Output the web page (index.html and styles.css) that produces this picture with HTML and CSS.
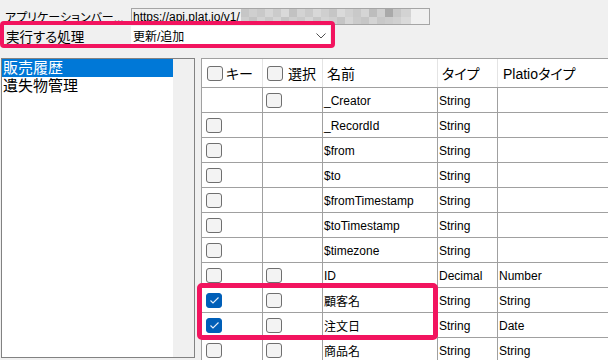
FILE: index.html
```html
<!DOCTYPE html>
<html lang="ja">
<head>
<meta charset="utf-8">
<title>設定</title>
<link rel="stylesheet" href="styles.css">
</head>
<body>
<div class="form">
  <div class="form-row row-url">
    <span class="label label-url">アプリケーションバー...</span>
    <div class="textbox"><span class="url">https://api.plat.io/v1/</span><span class="mosaic"></span></div>
  </div>
  <div class="form-row row-op">
    <span class="label label-op">実行する処理</span>
    <div class="select"><span class="select-text">更新/追加</span>
      <svg class="chev" width="10" height="6" viewBox="0 0 10 6"><polyline points="0.5,0.5 5,5 9.5,0.5" fill="none" stroke="#505050" stroke-width="1"/></svg>
    </div>
  </div>
  <div class="mark mark-op"></div>
</div>
<div class="main">
  <div class="side">
    <ul class="list">
      <li class="sel">販売履歴</li>
      <li>遺失物管理</li>
    </ul>
    <div class="side-rest"></div>
  </div>
  <div class="grid">
    <div class="row head">
      <div class="cell c1"><span class="cb"></span><span class="htext">キー</span></div>
      <div class="cell c2"><span class="cb"></span><span class="htext htext2">選択</span></div>
      <div class="cell c3">名前</div>
      <div class="cell c4">タイプ</div>
      <div class="cell c5">Platioタイプ</div>
    </div>
    <div class="row">
      <div class="cell c1"></div>
      <div class="cell c2"><span class="cb"></span></div>
      <div class="cell c3">_Creator</div>
      <div class="cell c4">String</div>
      <div class="cell c5"></div>
    </div>
    <div class="row">
      <div class="cell c1"><span class="cb"></span></div>
      <div class="cell c2"></div>
      <div class="cell c3">_RecordId</div>
      <div class="cell c4">String</div>
      <div class="cell c5"></div>
    </div>
    <div class="row">
      <div class="cell c1"><span class="cb"></span></div>
      <div class="cell c2"></div>
      <div class="cell c3">$from</div>
      <div class="cell c4">String</div>
      <div class="cell c5"></div>
    </div>
    <div class="row">
      <div class="cell c1"><span class="cb"></span></div>
      <div class="cell c2"></div>
      <div class="cell c3">$to</div>
      <div class="cell c4">String</div>
      <div class="cell c5"></div>
    </div>
    <div class="row">
      <div class="cell c1"><span class="cb"></span></div>
      <div class="cell c2"></div>
      <div class="cell c3">$fromTimestamp</div>
      <div class="cell c4">String</div>
      <div class="cell c5"></div>
    </div>
    <div class="row">
      <div class="cell c1"><span class="cb"></span></div>
      <div class="cell c2"></div>
      <div class="cell c3">$toTimestamp</div>
      <div class="cell c4">String</div>
      <div class="cell c5"></div>
    </div>
    <div class="row">
      <div class="cell c1"><span class="cb"></span></div>
      <div class="cell c2"></div>
      <div class="cell c3">$timezone</div>
      <div class="cell c4">String</div>
      <div class="cell c5"></div>
    </div>
    <div class="row">
      <div class="cell c1"><span class="cb"></span></div>
      <div class="cell c2"><span class="cb"></span></div>
      <div class="cell c3">ID</div>
      <div class="cell c4">Decimal</div>
      <div class="cell c5">Number</div>
    </div>
    <div class="row">
      <div class="cell c1"><span class="cb on"><svg width="11" height="9" viewBox="0 0 11 9"><polyline points="1.5,4.5 4,7 9.5,1.5" fill="none" stroke="#e8f0fa" stroke-width="1.1"/></svg></span></div>
      <div class="cell c2"><span class="cb"></span></div>
      <div class="cell c3">顧客名</div>
      <div class="cell c4">String</div>
      <div class="cell c5">String</div>
    </div>
    <div class="row">
      <div class="cell c1"><span class="cb on"><svg width="11" height="9" viewBox="0 0 11 9"><polyline points="1.5,4.5 4,7 9.5,1.5" fill="none" stroke="#e8f0fa" stroke-width="1.1"/></svg></span></div>
      <div class="cell c2"><span class="cb"></span></div>
      <div class="cell c3">注文日</div>
      <div class="cell c4">String</div>
      <div class="cell c5">Date</div>
    </div>
    <div class="row">
      <div class="cell c1"><span class="cb"></span></div>
      <div class="cell c2"><span class="cb"></span></div>
      <div class="cell c3">商品名</div>
      <div class="cell c4">String</div>
      <div class="cell c5">String</div>
    </div>
  </div>
  <div class="mark mark-rows"></div>
</div>
</body>
</html>
```
FILE: styles.css
```css
* { box-sizing: border-box; }
html, body { margin: 0; padding: 0; }
body {
  width: 608px;
  height: 360px;
  overflow: hidden;
  background: #f0f0f0;
  color: #000;
  font-family: "Liberation Sans", "Noto Sans CJK JP", sans-serif;
  font-feature-settings: "palt" 1;
}

/* top form */
.form { position: relative; height: 58px; padding-top: 8px; }
.form-row { display: flex; align-items: center; }
.row-url { height: 17px; }
.row-op { height: 19px; margin-top: 1px; }
.label { width: 131px; padding-left: 5px; white-space: nowrap; overflow: hidden; flex: none; }
.label-url { font-size: 12px; }
.label-op { font-size: 13.5px; padding-left: 6px; }
.textbox {
  width: 299px; height: 17px;
  border: 1px solid #a5a5a5;
  display: flex; align-items: center;
  padding-left: 1px;
  font-size: 12px;
}
.url { white-space: nowrap; }
.mosaic {
  width: 170px; height: 15px; margin-left: 1px;
  background:
    linear-gradient(to right, #c6c6c6 0 8px, #cfcfcf 8px 16px, #c9c9c9 16px 24px, #d6d6d6 24px 32px, #cbcbcb 32px 40px, #d9d9d9 40px 48px, #c2c2c2 48px 56px, #d3d3d3 56px 64px, #cacaca 64px 72px, #d8d8d8 72px 80px, #cfcfcf 80px 88px, #c6c6c6 88px 96px, #dadada 96px 104px, #d1d1d1 104px 112px, #c9c9c9 112px 120px, #d5d5d5 120px 128px, #bdbdbd 128px 136px, #cfcfcf 136px 144px, #a9a9a9 144px 152px, #c7c7c7 152px 160px, #d3d3d3 160px 170px) top / 100% 8px no-repeat,
    linear-gradient(to right, #cdcdcd 0 8px, #c3c3c3 8px 16px, #d2d2d2 16px 24px, #c8c8c8 24px 32px, #d4d4d4 32px 40px, #c4c4c4 40px 48px, #cecece 48px 56px, #c9c9c9 56px 64px, #d5d5d5 64px 72px, #c7c7c7 72px 80px, #d3d3d3 80px 88px, #cfcfcf 88px 96px, #c5c5c5 96px 104px, #d6d6d6 104px 112px, #cbcbcb 112px 120px, #c6c6c6 120px 128px, #d4d4d4 128px 136px, #c8c8c8 136px 144px, #cccccc 144px 152px, #d0d0d0 152px 160px, #dadada 160px 170px) bottom / 100% 7px no-repeat;
}
.select {
  width: 199px; height: 19px;
  background: #fff;
  display: flex; align-items: center; justify-content: space-between;
  padding: 0 4px 0 2px;
  font-size: 12px;
}
.chev { display: block; }
.mark { position: absolute; border-style: solid; border-color: #f2145f; pointer-events: none; z-index: 2; }
.mark-op { left: 0; top: 21px; width: 335px; height: 27px; border-width: 4px; border-radius: 4px; }

/* main area */
.main { position: relative; display: flex; align-items: flex-start; height: 302px; }
.side {
  margin-left: 1px; width: 194px; height: 300px;
  border: 1px solid #828282;
  background: #f0f0f0;
  display: flex;
}
.list { list-style: none; margin: 0; padding: 0; width: 171px; height: 100%; background: #fff; font-size: 15px; }
.list li { height: 18px; line-height: 18px; padding-left: 1px; white-space: nowrap; }
.list .sel { background: #0078d7; color: #fff; }
.side-rest { flex: 1; }

.grid {
  margin-left: 6px; flex: 1; height: 302px;
  border-left: 1px solid #a0a0a0;
  border-top: 1px solid #a0a0a0;
  background: #fff;
  overflow: hidden;
}
.row { display: flex; height: 25px; border-bottom: 1px solid #a0a0a0; }
.row.head { height: 29px; }
.cell {
  flex: none;
  display: flex; align-items: center;
  border-right: 1px solid #a0a0a0;
  padding-left: 1px; padding-top: 1px;
  white-space: nowrap; overflow: hidden;
  font-size: 12px;
}
.c1 { width: 61px; padding-left: 4px; }
.c2 { width: 60px; padding-left: 3px; }
.c3 { width: 115px; }
.c4 { width: 60px; }
.c5 { flex: 1; border-right: none; }
.head .cell { border-right-color: #e4e4e4; font-size: 14px; padding-left: 4px; padding-top: 0; }
.head .c1 { padding-left: 5px; }
.head .c2 { padding-left: 4px; }
.head .c5 { padding-left: 5px; }
.htext { margin-left: 3px; }
.htext2 { margin-left: 5px; }

.cb {
  flex: none;
  width: 16px; height: 15px;
  border: 1px solid #6f6f6f;
  border-radius: 3px;
  background: #f3f3f3;
}
.cb.on {
  background: #005fb8; border-color: #005fb8;
  display: flex; align-items: center; justify-content: center;
}
.cb svg { display: block; }

.mark-rows { left: 197px; top: 225px; width: 241px; height: 57px; border-width: 5px; border-radius: 5px; }
```
